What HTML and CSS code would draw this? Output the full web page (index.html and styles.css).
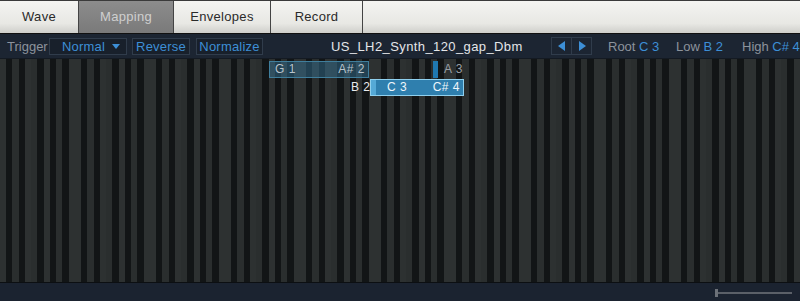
FILE: index.html
```html
<!DOCTYPE html>
<html lang="en">
  <head>
    <meta charset="utf-8" />
    <title>Sample Mapping</title>
    <link rel="stylesheet" href="styles.css">
  </head>
  <body>
    <div class="tabs">
      <div class="tab">Wave</div>
      <div class="tab active">Mapping</div>
      <div class="tab tab-env">Envelopes</div>
      <div class="tab tab-rec">Record</div>
      <div class="tab-rest"></div>
    </div>

    <div class="toolbar">
      <span class="lbl">Trigger</span>
      <div class="box dropdown"><span>Normal</span><span class="caret"></span></div>
      <div class="box btn-rev">Reverse</div>
      <div class="box btn-norm">Normalize</div>
      <div class="filename">US_LH2_Synth_120_gap_Dbm</div>
      <div class="arrows">
        <span class="arr"><svg width="10" height="10" viewBox="0 0 10 10"><path d="M8 0 L8 10 L1 5 Z" fill="#3d8fd6"/></svg></span>
        <span class="arr"><svg width="10" height="10" viewBox="0 0 10 10"><path d="M2 0 L2 10 L9 5 Z" fill="#3d8fd6"/></svg></span>
      </div>
      <span class="info info-root">Root <b>C 3</b></span>
      <span class="info info-low">Low <b>B 2</b></span>
      <span class="info">High <b>C# 4</b></span>
    </div>

    <div class="keys">
      <!-- zones sit on the key canvas, 6.25px per note -->
      <div class="zone zone-a"><span>G 1</span><span>A# 2</span></div>
      <div class="marker"></div>
      <span class="note note-a3">A 3</span>
      <span class="note note-b2">B 2</span>
      <div class="zone zone-sel"><span>C 3</span><span>C# 4</span></div>
    </div>

    <div class="footer">
      <div class="zoom"><span class="thumb"></span></div>
    </div>
  </body>
</html>
```

FILE: styles.css
```css
body {
  margin: 0;
  width: 800px;
  height: 301px;
  overflow: hidden;
  background: #1b2330;
  font-family: "Liberation Sans", Arial, sans-serif;
  font-size: 13px;
}

.tabs {
  display: flex;
  height: 32px;
  border-top: 1px solid #3a3a3a;
  border-bottom: 1px solid #111;
  background: linear-gradient(#f4f4f1, #e8e8e4 70%, #cfcfcb);
  letter-spacing: 0.3px;
}

.tab {
  width: 78px;
  line-height: 32px;
  text-align: center;
  color: #2a2a2a;
  border-right: 1px solid #444;
}

.tab.active {
  width: 94px;
  background: linear-gradient(#8c8c8c, #7a7a7a);
  color: #cfcfcf;
}

.tab-env {
  width: 96px;
}

.tab-rec {
  width: 91px;
}

.tab-rest {
  flex: 1;
}

.toolbar {
  display: flex;
  align-items: center;
  height: 24px;
  background: #1c2532;
  color: #8c939c;
  border-bottom: 1px solid #141a22;
  white-space: nowrap;
}

.toolbar > * {
  flex-shrink: 0;
}

.lbl {
  margin-left: 7px;
  width: 42px;
}

.box {
  box-sizing: border-box;
  height: 17px;
  line-height: 15px;
  border: 1px solid #303c4b;
  background: #18202b;
  color: #3d8fd6;
  text-align: center;
  letter-spacing: 0.2px;
}

.dropdown {
  display: flex;
  align-items: center;
  justify-content: space-between;
  width: 78px;
  padding: 0 6px 0 12px;
}

.caret {
  border-left: 4px solid transparent;
  border-right: 4px solid transparent;
  border-top: 5px solid #3d8fd6;
}

.btn-rev {
  margin-left: 5px;
  width: 58px;
}

.btn-norm {
  margin-left: 6px;
  width: 67px;
}

.filename {
  margin-left: 68px;
  width: 220px;
  color: #e4e6e9;
  letter-spacing: 0.4px;
}

.arrows {
  display: flex;
  box-sizing: border-box;
  width: 41px;
  height: 18px;
  border: 1px solid #303c4b;
}

.arr {
  flex: 1;
  display: flex;
  align-items: center;
  justify-content: center;
}

.arr + .arr {
  border-left: 1px solid #303c4b;
}

.info {
  margin-left: 16px;
}

.info-root {
  width: 52px;
}

.info-low {
  width: 50px;
}

.info b {
  font-weight: normal;
  color: #3d8fd6;
}

.keys {
  position: relative;
  height: 223px;
  background-image: linear-gradient(90deg,
    #2d3131 0, #2d3131 6.25px,
    #121516 6.25px, #121516 12.5px,
    #2a2e2e 12.5px, #2a2e2e 18.75px,
    #121516 18.75px, #121516 25px,
    #2d3131 25px, #2d3131 31.25px,
    #2a2e2e 31.25px, #2a2e2e 37.5px,
    #121516 37.5px, #121516 43.75px,
    #2d3131 43.75px, #2d3131 50px,
    #121516 50px, #121516 56.25px,
    #2a2e2e 56.25px, #2a2e2e 62.5px,
    #121516 62.5px, #121516 68.75px,
    #2d3131 68.75px, #2d3131 75px);
  background-size: 75px 100%;
  border-bottom: 1px solid #0c0f12;
}

.zone {
  position: absolute;
  display: flex;
  justify-content: space-between;
  box-sizing: border-box;
  height: 17px;
  line-height: 15px;
  padding: 0 3px 0 5px;
  font-size: 12px;
  letter-spacing: 0.5px;
}

.zone-a {
  left: 269px;
  top: 2px;
  width: 100px;
  border: 1px solid #3f7e9c;
  background: rgba(56, 120, 156, 0.45);
  color: #b9c4cc;
}

.zone-sel {
  left: 370px;
  top: 20px;
  width: 94px;
  border: 1px solid #8fd0ee;
  background: linear-gradient(90deg, #55a9d6 0, #55a9d6 5px, #2f7fae 5px);
  color: #eef6fb;
  padding-left: 16px;
}

.marker {
  position: absolute;
  left: 433px;
  top: 2px;
  width: 5px;
  height: 17px;
  background: #1f78b0;
}

.note {
  position: absolute;
  font-size: 12px;
  line-height: 17px;
  letter-spacing: 0.5px;
}

.note-a3 {
  left: 444px;
  top: 2px;
  color: #9aa0a6;
}

.note-b2 {
  left: 351px;
  top: 20px;
  color: #e8eaec;
}

.footer {
  display: flex;
  justify-content: flex-end;
  align-items: center;
  height: 20px;
}

.zoom {
  position: relative;
  width: 76px;
  height: 2px;
  margin-right: 8px;
  background: #5b6068;
}

.thumb {
  position: absolute;
  left: -1px;
  top: -3px;
  width: 3px;
  height: 8px;
  background: #6c7178;
}
```
